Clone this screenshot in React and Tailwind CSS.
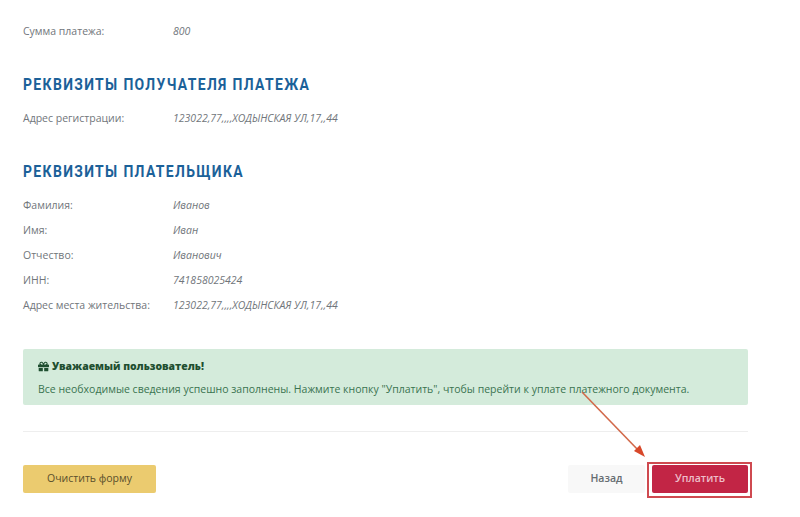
import { FaGift } from "react-icons/fa";

const bodyFont = "font-['Open_Sans',sans-serif]";

function InfoRow({ label, value, className = "" }) {
  return (
    <div className={`flex h-[25px] items-center text-[10.5px] ${className}`}>
      <div className="w-[150px] text-[#71767b]">{label}</div>
      <div className="italic text-[#71767b]">{value}</div>
    </div>
  );
}

function SectionTitle({ children }) {
  return (
    <h2 className="h-[25px] origin-left scale-x-[0.82] font-['Roboto',sans-serif] text-[17px] leading-[25px] font-bold tracking-[1.65px] whitespace-nowrap text-[#1b6199]">
      {children}
    </h2>
  );
}

export default function App() {
  return (
    <div className={`relative h-[517px] w-[800px] overflow-hidden bg-white pt-[19px] pl-[23px] ${bodyFont}`}>
      <div className="w-[725px]">
        <InfoRow label="Сумма платежа:" value="800" />

        <div className="mt-[28px]">
          <SectionTitle>РЕКВИЗИТЫ ПОЛУЧАТЕЛЯ ПЛАТЕЖА</SectionTitle>
        </div>
        <InfoRow className="mt-[9px]" label="Адрес регистрации:" value="123022,77,,,,ХОДЫНСКАЯ УЛ,17,,44" />

        <div className="mt-[28px]">
          <SectionTitle>РЕКВИЗИТЫ ПЛАТЕЛЬЩИКА</SectionTitle>
        </div>
        <div className="mt-[9px]">
          <InfoRow label="Фамилия:" value="Иванов" />
          <InfoRow label="Имя:" value="Иван" />
          <InfoRow label="Отчество:" value="Иванович" />
          <InfoRow label="ИНН:" value="741858025424" />
          <InfoRow label="Адрес места жительства:" value="123022,77,,,,ХОДЫНСКАЯ УЛ,17,,44" />
        </div>

        {/* Success message */}
        <div className="mt-[31px] h-[56px] rounded-[2px] bg-[#d4ebdb] px-[15px] pt-[9px] text-[#3a7350]">
          <div className="flex items-center gap-[3px] text-[10.4px] leading-[16px] font-extrabold text-[#1f4f30]">
            <FaGift size={11} />
            <span>Уважаемый пользователь!</span>
          </div>
          <p className="mt-[7px] text-[10.53px] leading-[16px] whitespace-nowrap">
            Все необходимые сведения успешно заполнены. Нажмите кнопку "Уплатить", чтобы перейти к уплате платежного документа.
          </p>
        </div>

        <div className="mt-[26px] h-px bg-[#eeeeee]" />

        {/* Buttons */}
        <div className="mt-[33px] flex items-start justify-between">
          <button className="h-[28px] w-[133px] rounded-[2px] bg-[#ebcb6f] text-[10.5px] text-[#5a4f2c]">
            Очистить форму
          </button>
          <div className="flex items-start">
            <button className="h-[28px] w-[77px] rounded-[2px] bg-[#f8f8f8] text-[10.5px] font-semibold text-[#666c71]">
              Назад
            </button>
            <div className="mt-[-3px] mr-[-4px] ml-[2px] border-2 border-[#cf4a50] pt-[1px] pr-[2px] pb-[3px] pl-[3px]">
              <button className="block h-[28px] w-[96px] rounded-[2px] bg-[#c22545] text-[10.5px] font-semibold text-[#eebfca]">
                Уплатить
              </button>
            </div>
          </div>
        </div>
      </div>

      {/* Annotation arrow */}
      <svg className="absolute top-[385px] left-[575px]" width="80" height="85" viewBox="0 0 80 85">
        <line x1="7" y1="7" x2="64" y2="66" stroke="#d2694a" strokeWidth="1.6" />
        <polygon points="70,72 59,66 65,60" fill="#d8482a" />
      </svg>
    </div>
  );
}
